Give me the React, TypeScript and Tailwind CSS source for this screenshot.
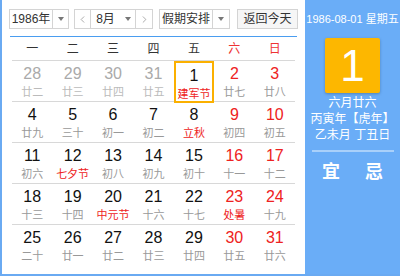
import { ChevronLeft, ChevronRight } from 'lucide-react'

type Day = { d: number; l: string; kind?: 'prev' | 'today'; red?: boolean; fest?: boolean }

const weeks: Day[][] = [
  [
    { d: 28, l: '廿二', kind: 'prev' },
    { d: 29, l: '廿三', kind: 'prev' },
    { d: 30, l: '廿四', kind: 'prev' },
    { d: 31, l: '廿五', kind: 'prev' },
    { d: 1, l: '建军节', kind: 'today', fest: true },
    { d: 2, l: '廿七', red: true },
    { d: 3, l: '廿八', red: true },
  ],
  [
    { d: 4, l: '廿九' },
    { d: 5, l: '三十' },
    { d: 6, l: '初一' },
    { d: 7, l: '初二' },
    { d: 8, l: '立秋', fest: true },
    { d: 9, l: '初四', red: true },
    { d: 10, l: '初五', red: true },
  ],
  [
    { d: 11, l: '初六' },
    { d: 12, l: '七夕节', fest: true },
    { d: 13, l: '初八' },
    { d: 14, l: '初九' },
    { d: 15, l: '初十' },
    { d: 16, l: '十一', red: true },
    { d: 17, l: '十二', red: true },
  ],
  [
    { d: 18, l: '十三' },
    { d: 19, l: '十四' },
    { d: 20, l: '中元节', fest: true },
    { d: 21, l: '十六' },
    { d: 22, l: '十七' },
    { d: 23, l: '处暑', red: true, fest: true },
    { d: 24, l: '十九', red: true },
  ],
  [
    { d: 25, l: '二十' },
    { d: 26, l: '廿一' },
    { d: 27, l: '廿二' },
    { d: 28, l: '廿三' },
    { d: 29, l: '廿四' },
    { d: 30, l: '廿五', red: true },
    { d: 31, l: '廿六', red: true },
  ],
]

const weekdays = ['一', '二', '三', '四', '五', '六', '日']

function Caret() {
  return (
    <span className="w-0 h-0 border-l-[3px] border-r-[3px] border-t-[4px] border-l-transparent border-r-transparent border-t-[#777]" />
  )
}

export default function App() {
  return (
    <div
      className="w-[400px] h-[276px] flex bg-white border-l-2 border-b-2 border-[#6aaaf2] overflow-hidden"
      style={{ fontFamily: '"Liberation Sans", "Noto Sans CJK SC", sans-serif' }}
    >
      {/* left: calendar */}
      <div className="w-[303px] flex flex-col px-[7px] pt-[9px]">
        <div className="flex items-center h-[20px] text-[12px] text-[#333]">
          <div className="flex h-full w-[60px] border border-[#d4d4d4]">
            <span className="flex-1 flex items-center justify-center">1986年</span>
            <span className="w-[16px] flex items-center justify-center border-l border-[#d4d4d4]">
              <Caret />
            </span>
          </div>
          <div className="flex h-full w-[79px] ml-[5px] border border-[#d4d4d4]">
            <span className="w-[16px] flex items-center justify-center border-r border-[#d4d4d4] text-[#888]">
              <ChevronLeft size={11} strokeWidth={1.5} />
            </span>
            <span className="flex-1 flex items-center justify-center">8月</span>
            <span className="w-[16px] flex items-center justify-center border-r border-[#d4d4d4]">
              <Caret />
            </span>
            <span className="w-[16px] flex items-center justify-center text-[#888]">
              <ChevronRight size={11} strokeWidth={1.5} />
            </span>
          </div>
          <div className="flex h-full w-[71px] ml-[6px] border border-[#d4d4d4]">
            <span className="flex-1 flex items-center justify-center">假期安排</span>
            <span className="w-[17px] flex items-center justify-center border-l border-[#d4d4d4]">
              <Caret />
            </span>
          </div>
          <div className="flex h-full w-[61px] ml-[7px] items-center justify-center border border-[#d4d4d4] bg-[#f6f6f6]">
            返回今天
          </div>
        </div>

        <div className="mt-[7px] h-px bg-[#4a9df0] mx-[1px]" />

        <div className="mx-[3px] grid grid-cols-7 h-[24px] items-center border-b border-[#d8d8d8] text-[12px]">
          {weekdays.map((w, i) => (
            <div key={w} className={`text-center ${i >= 5 ? 'text-[#e33]' : 'text-[#333]'}`}>
              {w}
            </div>
          ))}
        </div>

        <div className="mx-[3px] flex flex-col">
          {weeks.map((week, wi) => (
            <div
              key={wi}
              className={`grid grid-cols-7 h-[41px] ${wi < weeks.length - 1 ? 'border-b border-[#d8d8d8]' : ''}`}
            >
              {week.map((c) => {
                const numColor =
                  c.kind === 'prev' ? 'text-[#aaa]' : c.red ? 'text-[#e22]' : 'text-[#111]'
                const lunarColor =
                  c.kind === 'prev' ? 'text-[#bbb]' : c.fest ? 'text-[#e22]' : 'text-[#999]'
                return (
                  <div
                    key={`${wi}-${c.d}`}
                    className={`flex flex-col items-center pt-[3px] ${
                      c.kind === 'today' ? 'border-2 border-[#fbb000] pt-[1px]' : ''
                    }`}
                  >
                    <span className={`text-[16px] leading-[20px] ${numColor}`}>{c.d}</span>
                    <span className={`text-[11px] leading-[14px] mt-[1px] ${lunarColor}`}>{c.l}</span>
                  </div>
                )
              })}
            </div>
          ))}
        </div>
      </div>

      {/* right: today details */}
      <div className="flex-1 bg-[#6aadf7] flex flex-col items-center text-white">
        <div className="mt-[12px] text-[11px] leading-[14px] whitespace-nowrap">1986-08-01 星期五</div>
        <div className="mt-[12px] w-[55px] h-[55px] bg-[#fdb700] rounded-[2px] shadow-[0_1px_3px_rgba(0,0,0,0.25)] flex items-center justify-center text-[44px] leading-none">
          1
        </div>
        <div className="mt-[2px] text-[12px] leading-[16px] text-center whitespace-nowrap">
          <div>六月廿六</div>
          <div>丙寅年【虎年】</div>
          <div>乙未月 丁丑日</div>
        </div>
        <div className="mt-[7px] w-[82px] h-[2px] bg-[#a9d0fa]" />
        <div className="mt-[9px] flex gap-[25px] text-[18px] font-bold leading-[22px]">
          <span>宜</span>
          <span>忌</span>
        </div>
      </div>
    </div>
  )
}
